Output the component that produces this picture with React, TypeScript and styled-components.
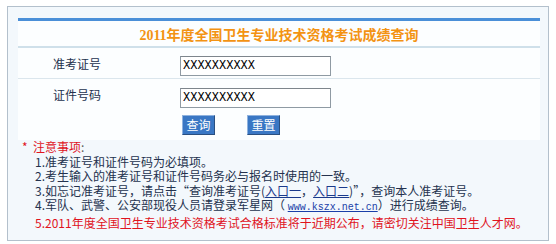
import styled, { createGlobalStyle } from "styled-components"

const GlobalStyle = createGlobalStyle`
    body {
        margin: 0;
        background: #ffffff;
        font-family: "Noto Sans CJK SC", "Noto Sans", sans-serif;
    }
`
const Page = styled.div`
    padding: 6px 6px 2px 7px;
`
const Frame = styled.div`
    width: 542px;
    height: 235px;
    border: 1px solid #b3c0cc;
    background: #f3f8fc;
    padding: 11px 10px 0 10px;
    box-sizing: border-box;
`
const Table = styled.div`
    width: 522px;
    border-top: 3px solid #4a8fd8;
    background: #fcfeff;
`
const TitleRow = styled.div`
    height: 25px;
    display: flex;
    align-items: center;
    justify-content: center;
    border-bottom: 2px solid #cfe0ea;
    color: #f39313;
    font-size: 14px;
    font-weight: bold;
    font-family: "Liberation Serif", "Noto Sans CJK SC", serif;
`
const FieldRow = styled.div<{ last?: boolean }>`
    height: ${props => props.last ? 31 : 30}px;
    display: grid;
    grid-template-columns: 162px 1fr;
    align-items: center;
    border-bottom: ${props => props.last ? "none" : "1px solid #dbe6ed"};
`
const Label = styled.span`
    padding-left: 35px;
    font-size: 12px;
    color: #24324e;
`
const Input = styled.input`
    width: 151px;
    height: 20px;
    box-sizing: border-box;
    border: 1px solid #8f9aa3;
    border-top-color: #7d858c;
    background: #ffffff;
    padding: 0 2px;
    font-family: "Liberation Mono", monospace;
    font-size: 12px;
    color: #000;
    outline: none;
`
const ButtonRow = styled.div`
    height: 30px;
    display: flex;
    align-items: center;
    gap: 32px;
    padding-left: 164px;
`
const Button = styled.button`
    width: 33px;
    height: 20px;
    padding: 0;
    background: #3a77c4;
    color: #ffffff;
    font-size: 12px;
    font-family: "Noto Sans CJK SC", sans-serif;
    border: 1px solid;
    border-color: #8fb2de #2a4f80 #2a4f80 #8fb2de;
    line-height: 18px;
`
const Notes = styled.div`
    padding: 0 0 0 4px;
    font-size: 12px;
    line-height: 14.6px;
    color: #24324e;
`
const NoteHead = styled.div`
    color: #555;
    span {
        color: #e0141e;
    }
`
const Star = styled.span`
    display: inline-block;
    width: 11px;
`
const Note = styled.div<{ alert?: boolean }>`
    padding-left: 13px;
    color: ${props => props.alert ? "#e0141e" : "#24324e"};
    white-space: nowrap;
`
const Link = styled.a`
    color: #1b3a8c;
    text-decoration: underline;
`
const Url = styled.a`
    color: #1a3fa8;
    text-decoration: underline;
    font-family: "Liberation Mono", monospace;
    font-size: 10px;
`

const App = () => {
    return (
        <Page>
            <GlobalStyle />
            <Frame>
                <Table>
                    <TitleRow>2011年度全国卫生专业技术资格考试成绩查询</TitleRow>
                    <FieldRow>
                        <Label>准考证号</Label>
                        <div><Input defaultValue="XXXXXXXXXX" /></div>
                    </FieldRow>
                    <FieldRow last>
                        <Label>证件号码</Label>
                        <div><Input defaultValue="XXXXXXXXXX" /></div>
                    </FieldRow>
                    <ButtonRow>
                        <Button>查询</Button>
                        <Button>重置</Button>
                    </ButtonRow>
                </Table>
                <Notes>
                    <NoteHead><Star><span>*</span></Star><span>注意事项</span>:</NoteHead>
                    <Note>1.准考证号和证件号码为必填项。</Note>
                    <Note>2.考生输入的准考证号和证件号码务必与报名时使用的一致。</Note>
                    <Note>3.如忘记准考证号，请点击“查询准考证号(<Link>入口一</Link>，<Link>入口二</Link>)”，查询本人准考证号。</Note>
                    <Note>4.军队、武警、公安部现役人员请登录军星网（ <Url>www.kszx.net.cn</Url>）进行成绩查询。</Note>
                    <Note alert>5.2011年度全国卫生专业技术资格考试合格标准将于近期公布，请密切关注中国卫生人才网。</Note>
                </Notes>
            </Frame>
        </Page>
    )
}
export default App
